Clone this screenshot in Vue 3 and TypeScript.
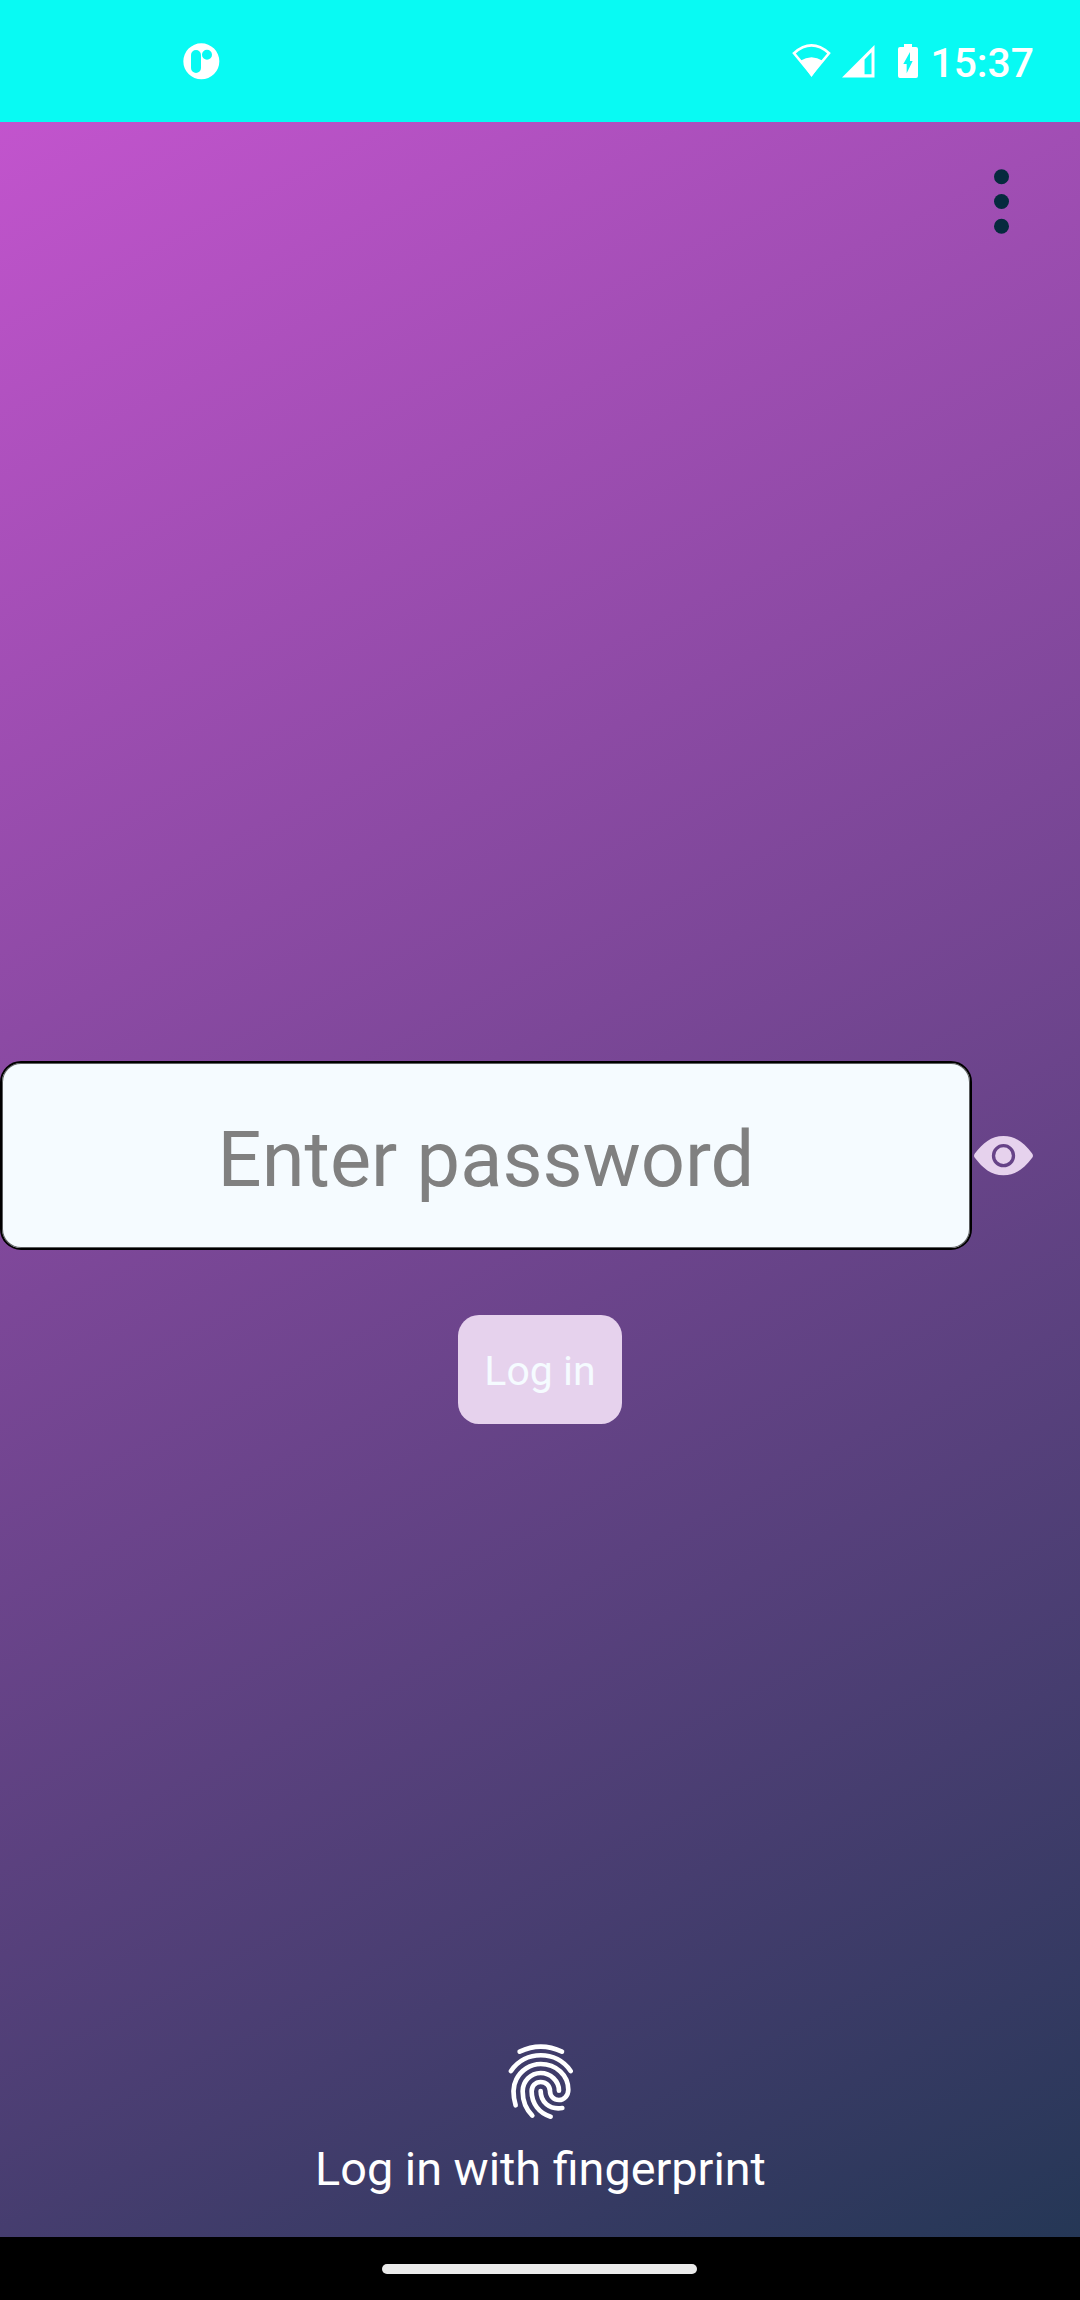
<script setup lang="ts">
import { ref } from 'vue'

const time = '15:37'
const password = ref<string>('')
const visible = ref<boolean>(false)
</script>

<template>
  <div class="screen">
    <header class="status">
      <svg class="app-icon" viewBox="0 0 108 108">
        <path
          fill="#fff"
          fill-rule="evenodd"
          d="M55 1a54 54 0 1 1 0 108a54 54 0 1 1 0-108zM39 21a15 15 0 0 0-15 15v39a15 15 0 0 0 30 0V36a15 15 0 0 0-15-15zM72 20a15 15 0 1 0 0 30a15 15 0 1 0 0-30z"
        />
      </svg>
      <div class="indicators">
        <svg class="wifi" viewBox="0 0 118 100">
          <path fill="none" stroke="#fff" stroke-width="8" d="M6 28Q59-19 112 28L59 92Z" />
          <path fill="#fff" d="M25 51Q59 29 93 51L59 100Z" />
        </svg>
        <svg class="signal" viewBox="0 0 98 98">
          <path fill="#fff" fill-rule="evenodd" d="M98 0V98H0zM89 22L68 44V88H89z" />
        </svg>
        <svg class="battery" viewBox="0 0 60 102">
          <path
            fill="#fff"
            fill-rule="evenodd"
            d="M18 0H42V9H54a6 6 0 0 1 6 6V96a6 6 0 0 1-6 6H6a6 6 0 0 1-6-6V15a6 6 0 0 1 6-6H18zM36 24L16 60H26V88L44 51H36z"
          />
        </svg>
        <span class="time">{{ time }}</span>
      </div>
    </header>

    <main class="main">
      <div class="toolbar">
        <button class="menu" aria-label="Menu">
          <svg viewBox="0 0 15 66">
            <g fill="#062a3e">
              <circle cx="7.500" cy="7.700" r="7.500" />
              <circle cx="7.500" cy="32.500" r="7.500" />
              <circle cx="7.500" cy="57.200" r="7.500" />
            </g>
          </svg>
        </button>
      </div>
      <form class="login" @submit.prevent>
        <div class="field">
          <input v-model="password" :type="visible ? 'text' : 'password'" placeholder="Enter password" />
          <button class="eye" type="button" aria-label="Show password" @click="visible = !visible">
            <svg viewBox="0 0 177 118">
              <path
                fill="#e6d2ed"
                fill-rule="evenodd"
                d="M88.500 0C126 0 151 22 174 52Q180 59 174 66C151 96 126 118 88.500 118C51 118 26 96 3 66Q-3 59 3 52C26 22 51 0 88.500 0zM88.500 24a35 35 0 1 0 0 70a35 35 0 1 0 0-70zM88.500 34a25 25 0 1 1 0 50a25 25 0 1 1 0-50z"
              />
            </svg>
          </button>
        </div>
        <button class="submit" type="submit">Log in</button>
      </form>
      <button class="biometric">
        <svg class="fingerprint" viewBox="80 66 202 234">
          <g fill="none" stroke="#fff" stroke-width="14" stroke-linecap="round" stroke-linejoin="round">
            <path d="M118 95Q181 65 245 95" />
            <path d="M92 153C135 90 228 90 271 153" />
            <path d="M106 256C98 228 98 197 108 178C122 150 150 132 181 132C228 132 264 166 264 209C264 227 251 240 236 240C220 240 209 228 209 213C209 197 197 186 181 186C165 186 154 198 154 214C154 251 177 280 211 290" />
            <path d="M156 287C135 266 127 243 127 214C127 184 151 159 181 159C211 159 236 183 236 212" />
            <path d="M181 213C181 245 206 270 246 264" />
          </g>
        </svg>
        <span>Log in with fingerprint</span>
      </button>
    </main>

    <footer class="nav"><div class="handle"></div></footer>
  </div>
</template>

<style>
body {
  margin: 0;
}
</style>

<style scoped>
.screen {
  width: 1080px;
  height: 2300px;
  display: flex;
  flex-direction: column;
  overflow: hidden;
  font-family: Roboto, sans-serif;
}
button {
  border: 0;
  padding: 0;
  background: none;
  font-family: inherit;
}
svg {
  display: block;
  overflow: visible;
}
.status {
  height: 122px;
  box-sizing: border-box;
  padding: 0 46px 0 183px;
  display: flex;
  justify-content: space-between;
  background: #08faf3;
}
.app-icon {
  width: 36px;
  height: 36px;
  margin-top: 43px;
}
.indicators {
  display: flex;
  align-items: flex-start;
}
.wifi {
  width: 39px;
  height: 33px;
  margin: 44px 11px 0 0;
}
.signal {
  width: 32.500px;
  height: 32.500px;
  margin: 44.500px 24px 0 0;
}
.battery {
  width: 20px;
  height: 34px;
  margin: 44px 12px 0 0;
}
.time {
  margin-top: 40px;
  font-size: 40.800px;
  line-height: 47px;
  font-weight: 500;
  color: #fff;
}
.main {
  height: 2115px;
  display: flex;
  flex-direction: column;
  background: linear-gradient(152.950deg, #c254cd, #253756);
}
.toolbar {
  height: 939px;
  display: flex;
  justify-content: flex-end;
  align-items: flex-start;
  padding-right: 71px;
}
.menu {
  margin-top: 47px;
}
.menu svg {
  width: 15px;
  height: 66px;
}
.login {
  height: 981px;
  display: flex;
  flex-direction: column;
  align-items: center;
}
.field {
  width: 1080px;
  display: flex;
  align-items: center;
}
.field input {
  width: 972px;
  height: 189px;
  box-sizing: border-box;
  margin: 0;
  padding: 7px 0 0;
  border: 2px solid #000;
  border-radius: 21px;
  box-shadow: inset 0 0 0 1px #5a5c5e;
  background: #f5fbff;
  color: #062a3e;
  font-family: inherit;
  font-size: 77.600px;
  text-align: center;
  outline: 0;
}
.field input::placeholder {
  color: #808080;
  opacity: 1;
}
.eye {
  margin-left: 2px;
}
.eye svg {
  width: 59px;
  height: 39.300px;
}
.submit {
  width: 164px;
  height: 109px;
  margin-top: 65px;
  padding-top: 3px;
  border-radius: 21px;
  background: #e6d2ed;
  color: #f5fbff;
  font-size: 41px;
}
.biometric {
  display: flex;
  flex-direction: column;
  align-items: center;
  color: #fff;
  font-size: 46.750px;
  line-height: 56px;
}
.biometric span {
  margin-left: 1px;
}
.fingerprint {
  width: 67.300px;
  height: 78px;
  margin: 0 0 21px 1px;
}
.nav {
  height: 63px;
  box-sizing: border-box;
  padding: 27px 1px 0 0;
  display: flex;
  justify-content: center;
  background: #000;
}
.handle {
  width: 315px;
  height: 10px;
  border-radius: 5px;
  background: #ebebeb;
}
</style>
